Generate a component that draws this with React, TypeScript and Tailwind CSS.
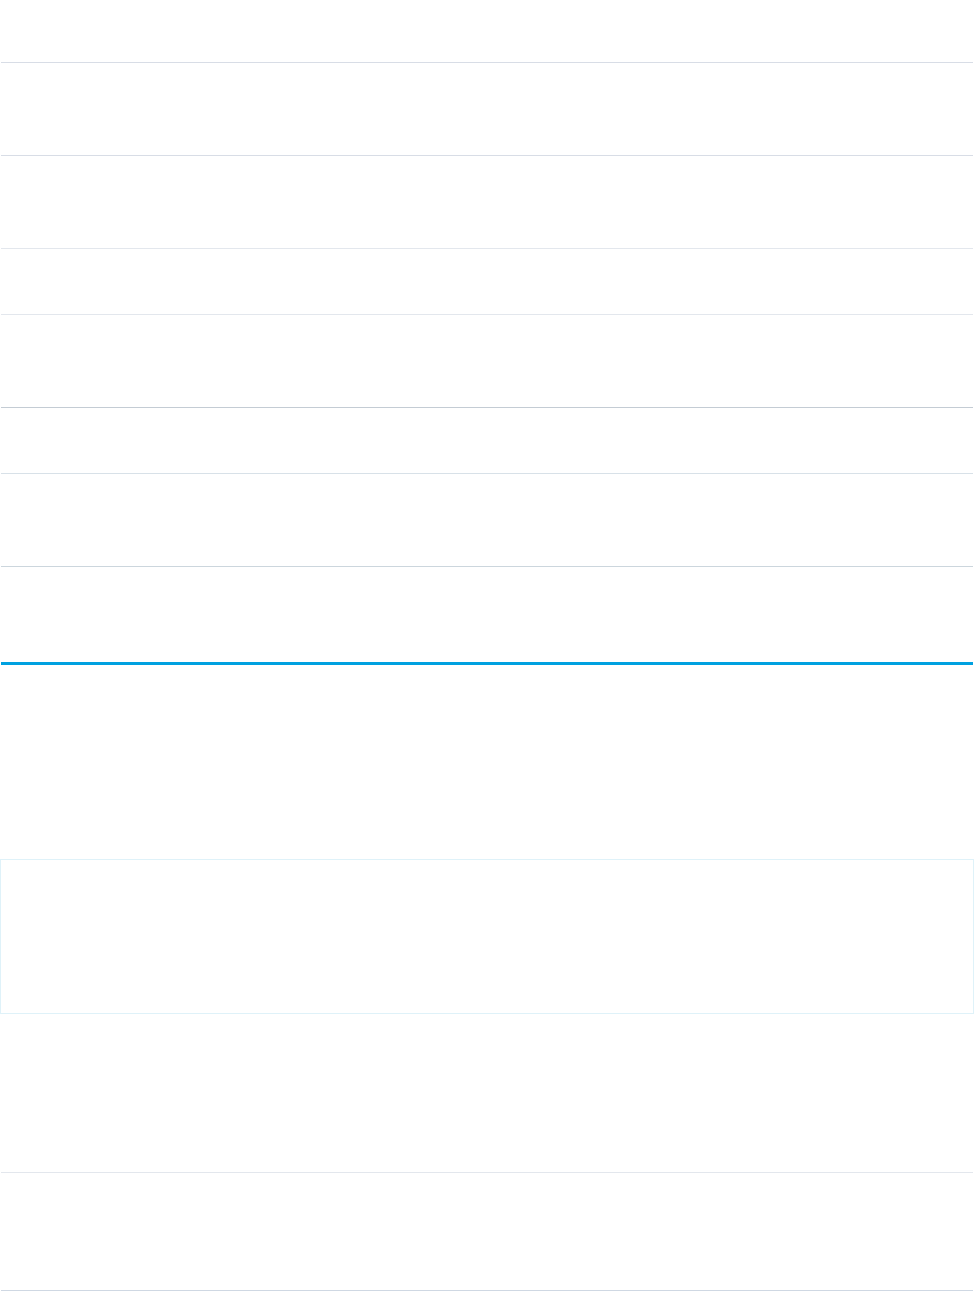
import React from 'react';

const rows = [
    { h: 'h-[63px]', line: 'border-[#d8dde6]' },
    { h: 'h-[93px]', line: 'border-[#d8dde6]' },
    { h: 'h-[93px]', line: 'border-[#e3e7ed]' },
    { h: 'h-[66px]', line: 'border-[#e3e7ed]' },
    { h: 'h-[93px]', line: 'border-[#c4ccd4]' },
    { h: 'h-[66px]', line: 'border-[#d8e1e8]' },
    { h: 'h-[93px]', line: 'border-[#ccd6dd]' },
];

export default function App() {
    return (
        <div className="w-[974px] h-[1292px] bg-white font-['Liberation_Sans',sans-serif] overflow-hidden">
            {/* table rows */}
            <div className="ml-px w-[972px] flex flex-col">
                {rows.map((r, i) => (
                    <div key={i} className={`${r.h} border-b ${r.line}`} />
                ))}
                <div className="h-[98px] border-b-[3px] border-[#00a1e0]" />
            </div>

            {/* spacer */}
            <div className="h-[194px]" />

            {/* callout box */}
            <div className="w-[974px] h-[155px] border border-[#dff2f9]" />

            {/* following rows */}
            <div className="ml-px w-[972px] flex flex-col">
                <div className="h-[159px] border-b border-[#e3e7ed]" />
                <div className="h-[118px] border-b border-[#cfd8e3]" />
            </div>
        </div>
    );
}
